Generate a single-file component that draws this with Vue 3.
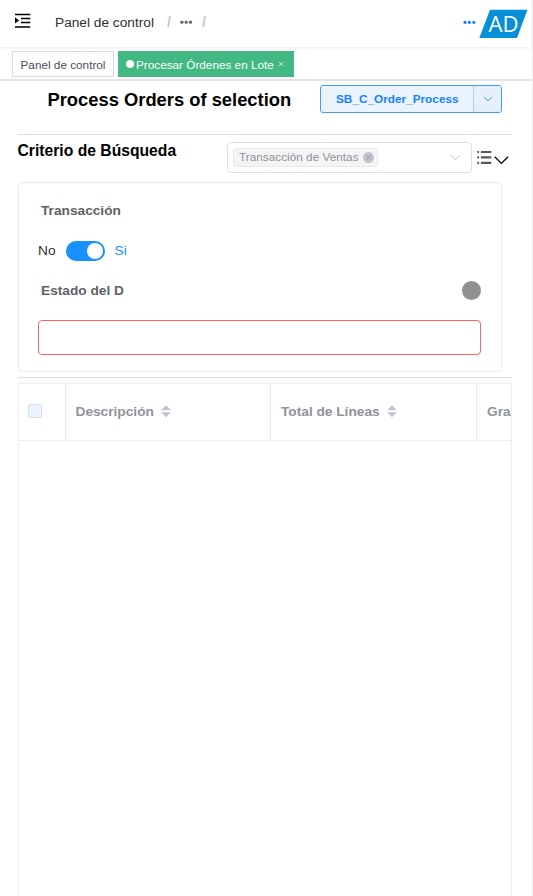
<script setup>
import { ref } from 'vue'

const active = ref(true)
const columns = ['Descripción', 'Total de Líneas']
</script>

<template>
  <div class="page">
    <header class="navbar">
      <svg class="fold" width="16" height="15" viewBox="0 0 16 15">
        <path d="M0 1.5H15.3M6 5.5H15.3M6 9.5H15.3M0 14H15.3" stroke="#000" stroke-width="1.3" />
        <path d="M0 4.3L4.1 7.4L0 10.5Z" />
      </svg>
      <nav class="crumbs">
        <span class="crumb">Panel de control</span>
        <span class="slash">/</span>
        <svg class="dots" width="13" height="4" viewBox="0 0 13 4"><circle cx="1.9" cy="2.2" r="1.6" /><circle cx="6.2" cy="2.2" r="1.6" /><circle cx="10.5" cy="2.2" r="1.6" /></svg>
        <span class="slash second">/</span>
      </nav>
      <svg class="dots more" width="13" height="4" viewBox="0 0 13 4"><circle cx="2" cy="2.3" r="1.6" /><circle cx="6.4" cy="2.3" r="1.6" /><circle cx="10.8" cy="2.3" r="1.6" /></svg>
      <svg class="logo" width="50" height="30" viewBox="0 0 50 30">
        <path d="M11 .8H48.5L38 29H.3Z" fill="#0790d8" />
        <text x="9.5" y="22.8" textLength="30" lengthAdjust="spacingAndGlyphs">AD</text>
      </svg>
    </header>

    <div class="tags">
      <span class="tag">Panel de control</span>
      <span class="tag current"><i class="bullet"></i><span>Procesar Órdenes en Lote</span><svg class="close" width="6" height="6" viewBox="0 0 6 6"><path d="M.8 .8L5.2 5.2M5.2 .8L.8 5.2" /></svg></span>
    </div>

    <main class="content">
      <section class="title-row">
        <h1>Process Orders of selection</h1>
        <div class="split">
          <button class="run">SB_C_Order_Process</button>
          <button class="caret"><svg width="10" height="6" viewBox="0 0 10 6"><path d="M.7 .7L5 5L9.3 .7" /></svg></button>
        </div>
      </section>

      <section class="criteria">
        <h2>Criterio de Búsqueda</h2>
        <div class="select">
          <span class="chip"><span>Transacción de Ventas</span><svg width="11" height="11" viewBox="0 0 11 11"><circle cx="5.5" cy="5.5" r="5.5" fill="#c0c4cc" /><path d="M3.4 3.4L7.6 7.6M7.6 3.4L3.4 7.6" stroke="#909399" stroke-width=".9" /></svg></span>
          <svg class="select-arrow" width="11" height="7" viewBox="0 0 11 7"><path d="M.6 .8L5.5 5.8L10.4 .8" /></svg>
        </div>
        <svg class="list" width="15" height="15" viewBox="0 0 15 15">
          <path d="M0.3 2H2.1M0.3 7.4H2.1M0.3 12.8H2.1M3.9 2H14.3M3.9 7.4H14.3M3.9 12.8H14.3" stroke="#56585e" stroke-width="2.2" />
        </svg>
        <svg class="expand" width="15" height="9" viewBox="0 0 15 9"><path d="M.7 .7L7.4 7.4L14.1 .7" /></svg>
      </section>

      <section class="card">
        <div class="label">Transacción</div>
        <div class="switch-row">
          <span>No</span>
          <button class="switch" :class="{ on: active }" @click="active = !active"><i></i></button>
          <span class="yes">Si</span>
        </div>
        <div class="status">
          <span class="label">Estado del D</span>
          <i class="state"></i>
        </div>
        <input class="field" type="text" />
      </section>

      <section class="table">
        <div class="thead">
          <div class="cell check"><i class="box"></i></div>
          <div v-for="name in columns" :key="name" class="cell">
            <span>{{ name }}</span>
            <svg class="sort" width="10" height="13" viewBox="0 0 10 13"><path d="M0 5.2L5 .3L10 5.2ZM0 7.3L5 12.2L10 7.3Z" /></svg>
          </div>
          <div class="cell last">Gra</div>
        </div>
        <div class="tbody"></div>
      </section>
    </main>
  </div>
</template>

<style>
body {
  overflow: hidden;
}
</style>

<style scoped>
* {
  box-sizing: border-box;
}
.page {
  width: 533px;
  height: 896px;
  overflow: hidden;
  display: flex;
  flex-direction: column;
  background: #fff;
  border-right: 1px solid #f0f0f0;
  font-family: "Liberation Sans", Arial, sans-serif;
  font-size: 14px;
  color: #303133;
}
svg {
  display: block;
  flex: none;
}
button {
  font: inherit;
  padding: 0;
  margin: 0;
}
.navbar {
  flex: none;
  height: 47px;
  margin-right: 1px;
  padding: 0 2.5px 0 15px;
  display: flex;
  align-items: flex-start;
  box-shadow: 0 1px 3px rgba(0, 21, 41, 0.1);
}
.fold {
  margin-top: 13px;
}
.crumbs {
  display: flex;
  align-items: center;
  height: 44px;
  margin-left: 24px;
  flex: 1;
}
.crumb {
  width: 99px;
  white-space: nowrap;
  font-size: 13.7px;
}
.slash {
  margin: 0 9px 0 13px;
  font-weight: 700;
  color: #c0c4cc;
}
.second {
  margin-left: 9px;
}
.dots {
  fill: #606266;
}
.more {
  margin: 20px 0.5px 0 0;
  fill: #1682ff;
}
.logo {
  margin: 9px 0 0 2.5px;
}
.logo text {
  font-family: "Open Sans", sans-serif;
  font-size: 21.5px;
  fill: #fff;
}
.tags {
  flex: none;
  height: 34px;
  margin-right: 1px;
  padding: 4px 0 0 12px;
  display: flex;
  gap: 4px;
  border-bottom: 2px solid #e4e4e4;
}
.tag {
  height: 26px;
  width: 102px;
  display: flex;
  align-items: center;
  justify-content: center;
  padding: 1px 0 0 0;
  border: 1px solid #d8dce5;
  color: #495060;
  font-size: 11.75px;
  white-space: nowrap;
}
.current {
  width: 176px;
  justify-content: flex-start;
  padding-left: 7px;
  background: #42b983;
  border-color: #42b983;
  color: #fff;
}
.bullet {
  width: 8px;
  height: 8px;
  margin: -2px 2px 0 0;
  border-radius: 50%;
  background: #fff;
}
.close {
  margin: -1px 0 0 4.5px;
  fill: none;
  stroke: #c8ebdb;
  stroke-width: 0.9;
}
.content {
  flex: 1;
  min-height: 0;
  padding: 0 20px 0 18px;
  display: flex;
  flex-direction: column;
}
.title-row {
  flex: none;
  height: 54px;
  padding: 4px 10px 0 29.5px;
  display: flex;
  justify-content: space-between;
  border-bottom: 1px solid #dcdfe6;
}
h1 {
  margin: 4px 0 0;
  font-size: 18.35px;
  line-height: 21px;
  color: #000;
  white-space: nowrap;
}
.split {
  width: 182px;
  height: 28px;
  display: flex;
  border: 1px solid #409eff;
  border-radius: 3px;
  background: #eaf3fe;
  overflow: hidden;
}
.run {
  flex: 1;
  padding: 0 0 0.5px 0.5px;
  border: 0;
  background: transparent;
  color: #1682ff;
  font-size: 11.8px;
  font-weight: 700;
}
.caret {
  width: 28px;
  display: flex;
  align-items: center;
  justify-content: center;
  border: 0;
  border-left: 1px solid #a3d0fd;
  background: #e6f0fb;
}
.caret path {
  fill: none;
  stroke: #409eff;
}
.criteria {
  flex: none;
  height: 47px;
  padding-top: 7px;
  display: flex;
  align-items: flex-start;
}
h2 {
  width: 209.5px;
  margin: 0 0 0 -0.5px;
  font-size: 15.7px;
  line-height: 18px;
  color: #000;
  white-space: nowrap;
}
.select {
  width: 245px;
  height: 31px;
  display: flex;
  align-items: center;
  justify-content: space-between;
  padding: 0 10.5px 0 5px;
  border: 1px solid #dcdfe6;
  border-radius: 4px;
}
.chip {
  width: 145px;
  height: 19px;
  padding: 0 3px 0 5px;
  display: flex;
  align-items: center;
  justify-content: space-between;
  border: 1px solid #e9e9eb;
  border-radius: 3px;
  background: #f4f4f5;
  color: #909399;
  font-size: 11.8px;
  white-space: nowrap;
}
.chip span {
  padding-bottom: 2px;
}
.select-arrow path {
  fill: none;
  stroke: #c0c4cc;
}
.list {
  margin: 8px 0 0 5px;
}
.expand {
  margin: 14px 0 0 2px;
}
.expand path {
  fill: none;
  stroke: #000;
  stroke-width: 1.3;
}
.card {
  flex: none;
  height: 190px;
  width: 484px;
  padding: 20px 20px 0 19px;
  border: 1px solid #e6ebf5;
  border-radius: 4px;
}
.label {
  padding-left: 3px;
  font-size: 13.7px;
  line-height: 16px;
  font-weight: 700;
  color: #606266;
}
.switch-row {
  height: 20px;
  margin-top: 21.5px;
  display: flex;
  align-items: center;
  gap: 10px;
  font-size: 13.7px;
}
.switch {
  width: 39px;
  height: 20px;
  padding: 2px;
  display: flex;
  border: 0;
  border-radius: 10px;
  background: #dcdfe6;
}
.switch i {
  width: 16px;
  height: 16px;
  border-radius: 50%;
  background: #fff;
}
.switch-row span {
  padding-bottom: 1px;
}
.on {
  justify-content: flex-end;
  background: #1890ff;
}
.yes {
  color: #1890ff;
}
.status {
  height: 19px;
  margin-top: 20.5px;
  display: flex;
  align-items: center;
  justify-content: space-between;
}
.state {
  width: 19px;
  height: 19px;
  border-radius: 50%;
  background: #909090;
}
.field {
  display: block;
  width: 443px;
  height: 35px;
  margin-top: 20px;
  border: 1px solid #ff6060;
  border-radius: 4px;
  background: #fff;
}
.table {
  flex: 1;
  min-height: 0;
  margin-top: 5px;
  padding-top: 5px;
  display: flex;
  flex-direction: column;
  border-top: 1px solid #dcdfe6;
}
.thead {
  flex: none;
  height: 58px;
  display: flex;
  overflow: hidden;
  border: 1px solid #ebeef5;
}
.cell {
  flex: none;
  width: 206px;
  padding: 0 0 1px 10px;
  display: flex;
  align-items: center;
  gap: 7px;
  border-right: 1px solid #e6e9f0;
  color: #909399;
  font-size: 13.7px;
  font-weight: 700;
  white-space: nowrap;
}
.cell:nth-child(2) {
  width: 205px;
  padding-left: 9.5px;
}
.check {
  width: 47px;
  padding: 0 0 2px 9px;
}
.box {
  width: 14px;
  height: 14px;
  border: 1px solid #dcdfe6;
  border-radius: 2px;
  background: #e9f2ff;
}
.sort {
  fill: #c0c4cc;
}
.tbody {
  flex: 1;
  border: solid #ebeef5;
  border-width: 0 1px;
}
</style>
